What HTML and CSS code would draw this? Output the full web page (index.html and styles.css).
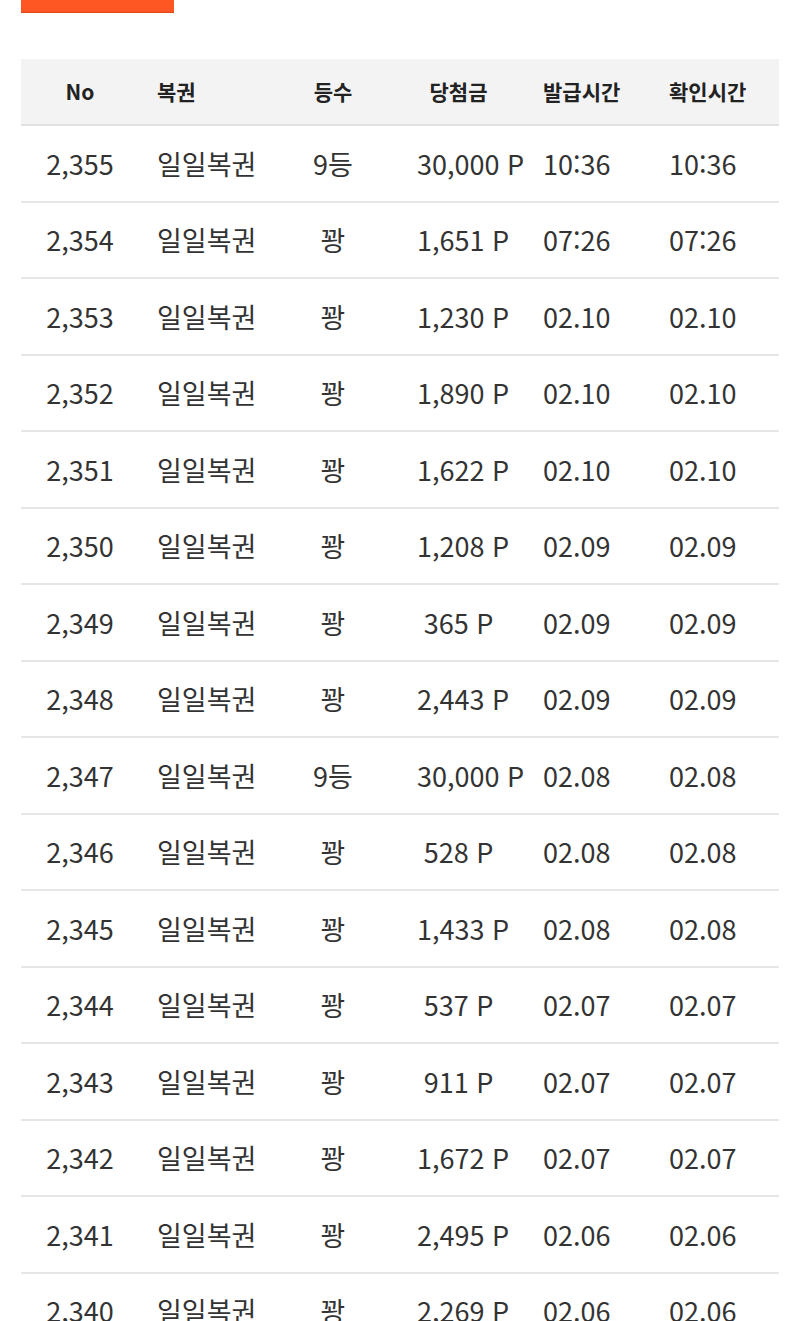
FILE: index.html
```html
<!DOCTYPE html>
<html lang="ko">
<head>
<meta charset="utf-8">
<link rel="stylesheet" href="styles.css">
</head>
<body>
<div class="page">
  <div class="btn-bottom"></div>
  <div class="list">
    <div class="row head">
      <div class="c c1">No</div><div class="c c2">복권</div><div class="c c3">등수</div><div class="c c4">당첨금</div><div class="c c5">발급시간</div><div class="c c6">확인시간</div>
    </div>
    <div class="row"><div class="c c1">2,355</div><div class="c c2">일일복권</div><div class="c c3">9등</div><div class="c c4">30,000 P</div><div class="c c5">10:36</div><div class="c c6">10:36</div></div>
    <div class="row"><div class="c c1">2,354</div><div class="c c2">일일복권</div><div class="c c3">꽝</div><div class="c c4">1,651 P</div><div class="c c5">07:26</div><div class="c c6">07:26</div></div>
    <div class="row"><div class="c c1">2,353</div><div class="c c2">일일복권</div><div class="c c3">꽝</div><div class="c c4">1,230 P</div><div class="c c5">02.10</div><div class="c c6">02.10</div></div>
    <div class="row"><div class="c c1">2,352</div><div class="c c2">일일복권</div><div class="c c3">꽝</div><div class="c c4">1,890 P</div><div class="c c5">02.10</div><div class="c c6">02.10</div></div>
    <div class="row"><div class="c c1">2,351</div><div class="c c2">일일복권</div><div class="c c3">꽝</div><div class="c c4">1,622 P</div><div class="c c5">02.10</div><div class="c c6">02.10</div></div>
    <div class="row"><div class="c c1">2,350</div><div class="c c2">일일복권</div><div class="c c3">꽝</div><div class="c c4">1,208 P</div><div class="c c5">02.09</div><div class="c c6">02.09</div></div>
    <div class="row"><div class="c c1">2,349</div><div class="c c2">일일복권</div><div class="c c3">꽝</div><div class="c c4">365 P</div><div class="c c5">02.09</div><div class="c c6">02.09</div></div>
    <div class="row"><div class="c c1">2,348</div><div class="c c2">일일복권</div><div class="c c3">꽝</div><div class="c c4">2,443 P</div><div class="c c5">02.09</div><div class="c c6">02.09</div></div>
    <div class="row"><div class="c c1">2,347</div><div class="c c2">일일복권</div><div class="c c3">9등</div><div class="c c4">30,000 P</div><div class="c c5">02.08</div><div class="c c6">02.08</div></div>
    <div class="row"><div class="c c1">2,346</div><div class="c c2">일일복권</div><div class="c c3">꽝</div><div class="c c4">528 P</div><div class="c c5">02.08</div><div class="c c6">02.08</div></div>
    <div class="row"><div class="c c1">2,345</div><div class="c c2">일일복권</div><div class="c c3">꽝</div><div class="c c4">1,433 P</div><div class="c c5">02.08</div><div class="c c6">02.08</div></div>
    <div class="row"><div class="c c1">2,344</div><div class="c c2">일일복권</div><div class="c c3">꽝</div><div class="c c4">537 P</div><div class="c c5">02.07</div><div class="c c6">02.07</div></div>
    <div class="row"><div class="c c1">2,343</div><div class="c c2">일일복권</div><div class="c c3">꽝</div><div class="c c4">911 P</div><div class="c c5">02.07</div><div class="c c6">02.07</div></div>
    <div class="row"><div class="c c1">2,342</div><div class="c c2">일일복권</div><div class="c c3">꽝</div><div class="c c4">1,672 P</div><div class="c c5">02.07</div><div class="c c6">02.07</div></div>
    <div class="row"><div class="c c1">2,341</div><div class="c c2">일일복권</div><div class="c c3">꽝</div><div class="c c4">2,495 P</div><div class="c c5">02.06</div><div class="c c6">02.06</div></div>
    <div class="row"><div class="c c1">2,340</div><div class="c c2">일일복권</div><div class="c c3">꽝</div><div class="c c4">2,269 P</div><div class="c c5">02.06</div><div class="c c6">02.06</div></div>
  </div>
</div>
</body>
</html>
```
FILE: styles.css
```css
html, body {
  margin: 0;
  padding: 0;
  background: #ffffff;
}
body {
  font-family: "Noto Sans CJK KR", "Noto Sans", sans-serif;
  color: #333333;
}
.page {
  padding: 0 21px;
}
.btn-bottom {
  width: 153px;
  height: 13px;
  background: #ff5724;
  border-bottom: 1px solid #e0481b;
  box-sizing: border-box;
}
.list {
  margin-top: 46px;
}
.row {
  display: grid;
  grid-template-columns: 118px 131px 126px 125px 126px 132px;
  height: 76.5px;
  box-sizing: border-box;
  border-bottom: 2px solid #e6e6e6;
  align-items: center;
  font-size: 27px;
  line-height: 1.3;
  white-space: nowrap;
}
.row.head {
  height: 67px;
  background: #f3f3f3;
  font-size: 21px;
  font-weight: 700;
  color: #222222;
  border-bottom: 2px solid #e2e2e2;
}
.c {
  min-width: 0;
  text-align: center;
}
.c2 {
  text-align: left;
  padding-left: 18px;
}
.c4 {
  padding: 0 21px;
}
.c5, .c6 {
  text-align: left;
  padding-left: 22px;
}
```
